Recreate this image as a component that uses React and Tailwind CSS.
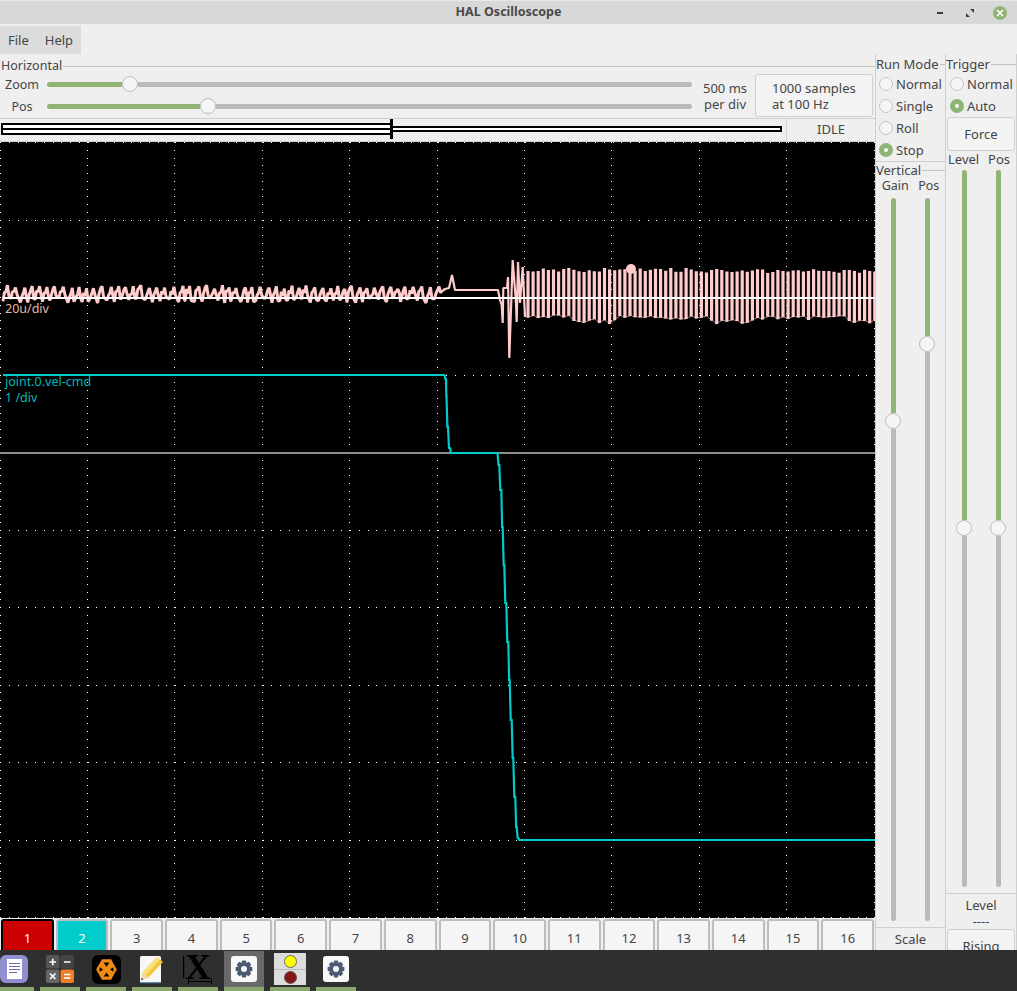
import React from 'react';

const channels = ['1', '2', '3', '4', '5', '6', '7', '8', '9', '10', '11', '12', '13', '14', '15', '16'];

// small seeded generator so the trace is the same on every load
const makeRand = (seed) => () => {
  seed = (seed * 16807) % 2147483647;
  return seed / 2147483647;
};

const gridDots = () => {
  let d = '';
  for (let k = 0; k <= 10; k++) {
    const x = Math.floor(87.4 * k);
    for (let i = 0; i <= 100; i++) d += `M${x} ${Math.round(142 + 7.75 * i)}h1v1h-1z`;
  }
  for (let j = 0; j <= 10; j++) {
    const y = Math.round(142 + 77.5 * j);
    for (let i = 0; i <= 100; i++) d += `M${Math.round(8.75 * i)} ${y}h1v1h-1z`;
  }
  return d;
};

const rand = makeRand(4711);

// quiet part: uneven saw teeth around y 293
const quietTrace = () => {
  const pts = [];
  let x = 3;
  while (x < 438) {
    const a = 285 + rand() * 4;
    const b = 298 + rand() * 5;
    pts.push([x, b], [x + 1.4, a + 3 + rand() * 7], [x + 3, a + 2 + rand() * 6], [x + 4.4, a], [x + 6, b - rand() * 6]);
    x += 6.5 + rand() * 3;
  }
  pts.push([441, 292]);
  return pts.map((p) => p.join(',')).join(' ');
};

const burstStart = [[441, 292], [445, 289], [449, 288], [452, 275], [455, 290], [498, 290], [500, 300], [501.7, 305], [502.7, 323],
  [503.3, 288], [507, 288], [508, 277], [509.3, 358], [512.7, 260], [516, 303], [516.7, 322], [518, 262], [520, 303], [522.7, 267], [525, 317]]
  .map((p) => p.join(',')).join(' ');

// busy part: separate tall bars, joined low down by a faint line
const pulses = () => {
  let bars = '';
  let links = '';
  let prev = null;
  for (let x = 528; x < 875; x += 5.1) {
    const top = 268 + rand() * 4 + (x > 700 ? 1 : 0);
    const wave = Math.sin((x - 560) / 22) > 0.55 ? 4 : 0;
    const bot = 315 + rand() * 4 + wave + (x > 600 ? 1 : 0);
    bars += `M${x.toFixed(1)} ${top.toFixed(1)}V${bot.toFixed(1)}`;
    if (prev) links += `M${prev[0].toFixed(1)} ${prev[1].toFixed(1)}L${x.toFixed(1)} ${bot.toFixed(1)}`;
    prev = [x, bot - 1];
  }
  return { bars, links };
};

// steep run first, then a small jog across to the next sample
const cyanSteps = (list) => {
  const pts = [list[0]];
  for (let i = 1; i < list.length; i++) {
    const [x0] = list[i - 1];
    const [x1, y1] = list[i];
    pts.push([x0 + Math.min(1, (x1 - x0) * 0.6), y1], list[i]);
  }
  return pts.map((p) => p.join(',')).join(' ');
};

const cyanTrace = cyanSteps([
  [3, 375], [444.5, 375], [446, 379], [446.5, 396], [448, 427], [450, 448], [452, 453], [497.5, 453],
  [499.3, 465], [501.3, 490], [502.7, 527], [504.3, 565], [506.3, 603], [508.3, 642], [509.7, 680],
  [511.7, 720], [513.3, 758], [515.3, 797], [516.7, 827], [518.3, 838], [520, 840], [875, 840],
]);

const dots = gridDots();
const quiet = quietTrace();
const { bars, links } = pulses();

const Thumb = () => (
  <div className="w-4 h-4 shrink-0 rounded-full bg-[#f5f5f5] border border-[#bdbdbd]" />
);

const HSlider = ({ fill }) => (
  <div className="flex-1 flex items-center">
    <div className={`h-[5px] rounded-l-full bg-[#8fb474] ${fill}`} />
    <Thumb />
    <div className="h-[5px] flex-1 rounded-r-full bg-[#bababa]" />
  </div>
);

const VSlider = ({ fill }) => (
  <div className="h-full w-4 flex flex-col items-center">
    <div className={`w-[5px] rounded-t-full bg-[#8fb474] ${fill}`} />
    <Thumb />
    <div className="w-[5px] flex-1 rounded-b-full bg-[#bababa]" />
  </div>
);

const Radio = ({ label, checked }) => (
  <div className="h-[22px] flex items-center gap-[3px] pl-[4px]">
    {checked ? (
      <div className="w-[14px] h-[14px] rounded-full bg-[#8fb474] flex items-center justify-center">
        <div className="w-1 h-1 rounded-full bg-white" />
      </div>
    ) : (
      <div className="w-[14px] h-[14px] rounded-full bg-[#f5f5f5] border border-[#c4c4c4]" />
    )}
    <span className="pt-px">{label}</span>
  </div>
);

const FrameLabel = ({ children, className = '' }) => (
  <div className={`flex items-center shrink-0 h-[14px] ${className}`}>
    <span className="leading-none">{children}</span>
    <div className="flex-1 h-px bg-[#c4c4c4] ml-px" />
  </div>
);

const Gear = () => (
  <div className="w-[26px] h-[26px] rounded-[3px] bg-[#f8f8f8] flex items-center justify-center">
    <svg width="18" height="18" viewBox="0 0 18 18">
      <g fill="#4b5b74">
        {[0, 45, 90, 135].map((r) => (
          <rect key={r} x="6.8" y="0.6" width="4.4" height="16.8" rx="1" transform={`rotate(${r} 9 9)`} />
        ))}
      </g>
      <circle cx="9" cy="9" r="5.2" fill="none" stroke="#4b5b74" strokeWidth="3" />
      <circle cx="9" cy="9" r="3" fill="#f8f8f8" />
    </svg>
  </div>
);

const DocIcon = () => (
  <div className="w-7 h-7 rounded-md bg-[#8f8fd2] flex items-center justify-center">
    <div className="w-[15px] h-5 bg-white flex flex-col gap-[2px] px-[2px] pt-[4px]">
      <div className="h-px bg-[#6a6ab0]" />
      <div className="h-px bg-[#6a6ab0]" />
      <div className="h-px bg-[#6a6ab0]" />
      <div className="h-px w-2 bg-[#6a6ab0]" />
    </div>
  </div>
);

// calculator tiles are drawn so the symbols stay inside their squares
const CalcIcon = () => (
  <svg width="28" height="28" viewBox="0 0 28 28">
    <rect x="0" y="0" width="13.5" height="13.5" rx="2" fill="#555555" />
    <rect x="14.5" y="0" width="13.5" height="13.5" rx="2" fill="#444444" />
    <rect x="0" y="14.5" width="13.5" height="13.5" rx="2" fill="#666666" />
    <rect x="14.5" y="14.5" width="13.5" height="13.5" rx="2" fill="#f07d28" />
    <path d="M3.5 7H10M6.75 3.8V10.2M18 7H24.5M4 18.5L9.5 24M9.5 18.5L4 24M18 19.5H24.5M18 23H24.5" stroke="#ffffff" strokeWidth="1.6" fill="none" />
  </svg>
);

const OrangeIcon = () => (
  <div className="w-[29px] h-[29px] rounded-md bg-black flex items-center justify-center">
    <svg width="23" height="23" viewBox="0 0 20 20">
      <polygon points="6,1 14,1 19,10 14,19 6,19 1,10" fill="#f08a16" />
      <polygon points="7.5,4 12.5,4 10,7.5" fill="#000" />
      <polygon points="7.5,16 12.5,16 10,12.5" fill="#000" />
      <polygon points="4,8 7,10 4,12" fill="#000" />
      <polygon points="16,8 13,10 16,12" fill="#000" />
    </svg>
  </div>
);

const PencilIcon = () => (
  <svg width="26" height="29" viewBox="0 0 26 29">
    <rect x="1" y="1" width="21" height="27" rx="1.5" fill="#f7f7f7" />
    <rect x="1" y="27" width="21" height="1.2" fill="#5c8fbf" />
    <polygon points="18,2 24,7 9,23 3,18" fill="#f3c83b" />
    <polygon points="18,2 21,4.5 6,20.5 3,18" fill="#f9e27a" />
    <polygon points="3,18 9,23 2,25" fill="#e9d9b4" />
    <polygon points="2.8,23 4.6,24.4 2,25" fill="#333333" />
  </svg>
);

const XIcon = () => (
  <svg width="32" height="32" viewBox="0 0 32 32">
    <rect x="1" y="3" width="1.2" height="22" fill="#000" />
    <text x="3" y="25.5" fontFamily="'Liberation Serif', serif" fontWeight="700" fontSize="36" fill="#000">X</text>
    <rect x="6" y="28" width="24" height="1" fill="#000" />
    <rect x="6" y="26" width="1" height="5" fill="#000" />
    <rect x="29" y="26" width="1" height="5" fill="#000" />
  </svg>
);

const LedIcon = () => (
  <div className="w-8 h-8 bg-[#dcdcdc] flex flex-col items-center justify-center gap-px">
    <div className="w-[13px] h-[13px] rounded-full bg-[#ffff00] border border-[#666666]" />
    <div className="w-full h-px bg-[#bdbdbd]" />
    <div className="w-[13px] h-[13px] rounded-full bg-[#861616] border border-[#555555]" />
  </div>
);

const DockItem = ({ children, active }) => (
  <div className="w-10 h-full flex flex-col">
    <div className={`flex-1 flex items-center justify-center ${active ? 'bg-[#696969]' : ''}`}>{children}</div>
    <div className="h-1 bg-[#8aa86e]" />
  </div>
);

export default function App() {
  return (
    <div
      className="w-[1017px] h-[991px] overflow-hidden flex flex-col bg-[#efefef] text-[#454545] text-[13px]"
      style={{ fontFamily: "'Noto Sans', sans-serif" }}
    >
      {/* title bar */}
      <div className="h-6 shrink-0 grid grid-cols-[1fr_auto_1fr] items-center bg-[#d8d8d8] border-t border-[#e8e8e8]">
        <div />
        <div className="font-bold text-[12.5px] text-[#4a4a4a]">HAL Oscilloscope</div>
        <div className="flex justify-end items-center pr-[2px]">
          <div className="w-[30px] flex justify-center">
            <div className="w-[6px] h-[2px] bg-[#3c3c3c]" />
          </div>
          <div className="w-[30px] flex justify-center">
            <svg width="8" height="8" viewBox="0 0 8 8">
              <polygon points="4,0 8,0 8,4" fill="#3c3c3c" />
              <polygon points="0,4 4,8 0,8" fill="#3c3c3c" />
            </svg>
          </div>
          <div className="w-[30px] flex justify-center">
            <div className="w-[14px] h-[14px] rounded-full bg-[#8fb474] flex items-center justify-center">
              <svg width="8" height="8" viewBox="0 0 8 8">
                <path d="M1 1L7 7M7 1L1 7" stroke="#ffffff" strokeWidth="1.6" />
              </svg>
            </div>
          </div>
        </div>
      </div>

      {/* menu */}
      <div className="h-[30px] shrink-0 pt-[2px]">
        <div className="w-[81px] h-[28px] bg-[#dcdcdc] flex items-center gap-4 pl-2 pt-[2px]">
          <span>File</span>
          <span>Help</span>
        </div>
      </div>

      <div className="h-[896px] shrink-0 flex overflow-hidden">
        {/* scope column */}
        <div className="w-[875px] shrink-0 flex flex-col">
          <FrameLabel className="mt-[5px] text-[12.5px]">
            <span className="pl-px">Horizontal</span>
          </FrameLabel>
          <div className="h-[46px] shrink-0 flex border-b border-[#d0d0d0]">
            <div className="w-[692px] shrink-0 flex flex-col text-[12.5px]">
              <div className="h-[22px] flex items-center">
                <span className="w-[42px] ml-px mr-[4px] pt-[3px] text-center">Zoom</span>
                <HSlider fill="w-[75px]" />
              </div>
              <div className="h-[22px] flex items-center">
                <span className="w-[42px] ml-px mr-[4px] pt-[3px] text-center">Pos</span>
                <HSlider fill="w-[153px]" />
              </div>
            </div>
            <div className="w-[63px] shrink-0 text-center leading-4 pt-[7px] pl-[3px] text-[13px]">
              <div>500 ms</div>
              <div>per div</div>
            </div>
            <div className="w-[118px] h-[43px] mt-px shrink-0 rounded-[3px] border border-[#cfcfcf] bg-[#f3f3f3] pl-4 pt-[5px] leading-4">
              <div>1000 samples</div>
              <div>at 100 Hz</div>
            </div>
          </div>
          <div className="h-[23px] shrink-0 flex border-b border-[#d0d0d0]">
            <svg width="787" height="22" viewBox="0 119 787 22" className="shrink-0 border-r border-[#d8d8d8]" shapeRendering="crispEdges">
              <rect x="1" y="123" width="390" height="2" fill="#000" />
              <rect x="1" y="128" width="390" height="2" fill="#000" />
              <rect x="1" y="133" width="390" height="2" fill="#000" />
              <rect x="1" y="123" width="2" height="12" fill="#000" />
              <rect x="3" y="125" width="388" height="3" fill="#fff" />
              <rect x="3" y="130" width="388" height="3" fill="#fff" />
              <rect x="391" y="126" width="392" height="6" fill="#000" />
              <rect x="393" y="128" width="388" height="2" fill="#fff" />
              <rect x="390" y="119" width="3" height="20" fill="#000" />
            </svg>
            <div className="flex-1 flex items-center justify-center">IDLE</div>
          </div>

          {/* scope display */}
          <div className="relative h-[776px] shrink-0 bg-black overflow-hidden">
            <svg width="875" height="776" viewBox="0 142 875 776" className="block">
              <path d={dots} fill="#ffffff" shapeRendering="crispEdges" />
              <rect x="0" y="452" width="875" height="2" fill="#8c8c8c" />
              <polyline points={quiet} fill="none" stroke="#ffcbcb" strokeWidth="3" strokeLinejoin="bevel" />
              <polyline points={burstStart} fill="none" stroke="#ffcbcb" strokeWidth="2.2" strokeLinejoin="bevel" />
              <path d={links} fill="none" stroke="#ffcbcb" strokeWidth="1" opacity="0.6" />
              <path d={bars} fill="none" stroke="#ffcbcb" strokeWidth="3.2" />
              <rect x="3" y="297" width="872" height="2" fill="#ffffff" />
              <circle cx="631" cy="269" r="5" fill="#ffcbcb" />
              <polyline points={cyanTrace} fill="none" stroke="#00cccc" strokeWidth="2.2" />
            </svg>
            <div className="absolute left-[5px] top-[159px] text-[12.5px] leading-4 text-[#e0b8a8]">20u/div</div>
            <div className="absolute left-[5px] top-[232px] text-[12.5px] leading-4 text-[#00b8b8]">
              <div>joint.0.vel-cmd</div>
              <div>1 /div</div>
            </div>
          </div>

          {/* channel buttons */}
          <div className="h-10 shrink-0 grid grid-cols-16 pt-px gap-0">
            {channels.map((c, i) => (
              <div key={c} className="px-[1px]">
                <div
                  className={
                    i === 0
                      ? 'h-10 rounded-t-[3px] border-2 border-black bg-[#cc0000] text-white text-center pt-[8px]'
                      : i === 1
                        ? 'h-10 rounded-t-[3px] border-2 border-[#bdbdbd] bg-[#00cccc] text-white text-center pt-[8px]'
                        : 'h-10 rounded-t-[3px] border-2 border-[#bdbdbd] bg-[#f5f5f5] text-center pt-[8px]'
                  }
                >
                  {c}
                </div>
              </div>
            ))}
          </div>
        </div>

        {/* run mode + vertical */}
        <div className="w-[71px] shrink-0 border-l border-r border-[#cfcfcf] flex flex-col">
          <FrameLabel className="mt-[3px]">Run Mode</FrameLabel>
          <div className="h-[91px] shrink-0 pt-[2px] -ml-px border-b border-[#cfcfcf]">
            <Radio label="Normal" />
            <Radio label="Single" />
            <Radio label="Roll" />
            <Radio label="Stop" checked />
          </div>
          <FrameLabel className="mt-[1px]">Vertical</FrameLabel>
          <div className="flex justify-around shrink-0 h-[19px] items-center px-px text-[12.5px]">
            <span>Gain</span>
            <span>Pos</span>
          </div>
          <div className="h-[723px] shrink-0 flex justify-between pl-[9px] pr-[10px] mt-[2px]">
            <VSlider fill="h-[215px]" />
            <VSlider fill="h-[138px]" />
          </div>
          <div className="mt-[6px] shrink-0 border-t border-[#cfcfcf] pt-px text-center leading-5">
            <div>Scale</div>
          </div>
        </div>

        {/* trigger */}
        <div className="w-[71px] shrink-0 border-r border-[#cfcfcf] flex flex-col">
          <FrameLabel className="mt-[3px]">Trigger</FrameLabel>
          <div className="pt-[2px] shrink-0">
            <Radio label="Normal" />
            <Radio label="Auto" checked />
          </div>
          <div className="h-[34px] shrink-0 mx-px pt-px rounded-[3px] border border-[#cfcfcf] bg-[#f3f3f3] flex items-center justify-center">
            Force
          </div>
          <div className="flex justify-between shrink-0 h-4 items-center pt-[2px] pl-[2px] pr-[6px]">
            <span>Level</span>
            <span>Pos</span>
          </div>
          <div className="h-[717px] shrink-0 flex justify-between px-[10px] mt-[3px]">
            <VSlider fill="h-[350px]" />
            <VSlider fill="h-[350px]" />
          </div>
          <div className="mt-[6px] shrink-0 border-t border-[#cfcfcf] pt-[3px] text-center leading-4">
            <div>Level</div>
            <div>----</div>
          </div>
          <div className="h-10 shrink-0 mx-px rounded-[3px] border border-[#cfcfcf] bg-[#f3f3f3] text-center pt-[7px]">
            Rising
          </div>
        </div>
      </div>

      {/* dock */}
      <div className="h-[41px] shrink-0 bg-[#2f2f2f] pt-px flex gap-[6px] -ml-1.5">
        <DockItem><DocIcon /></DockItem>
        <DockItem><CalcIcon /></DockItem>
        <DockItem><OrangeIcon /></DockItem>
        <DockItem><PencilIcon /></DockItem>
        <DockItem><XIcon /></DockItem>
        <DockItem active><Gear /></DockItem>
        <DockItem><LedIcon /></DockItem>
        <DockItem><Gear /></DockItem>
      </div>
    </div>
  );
}
